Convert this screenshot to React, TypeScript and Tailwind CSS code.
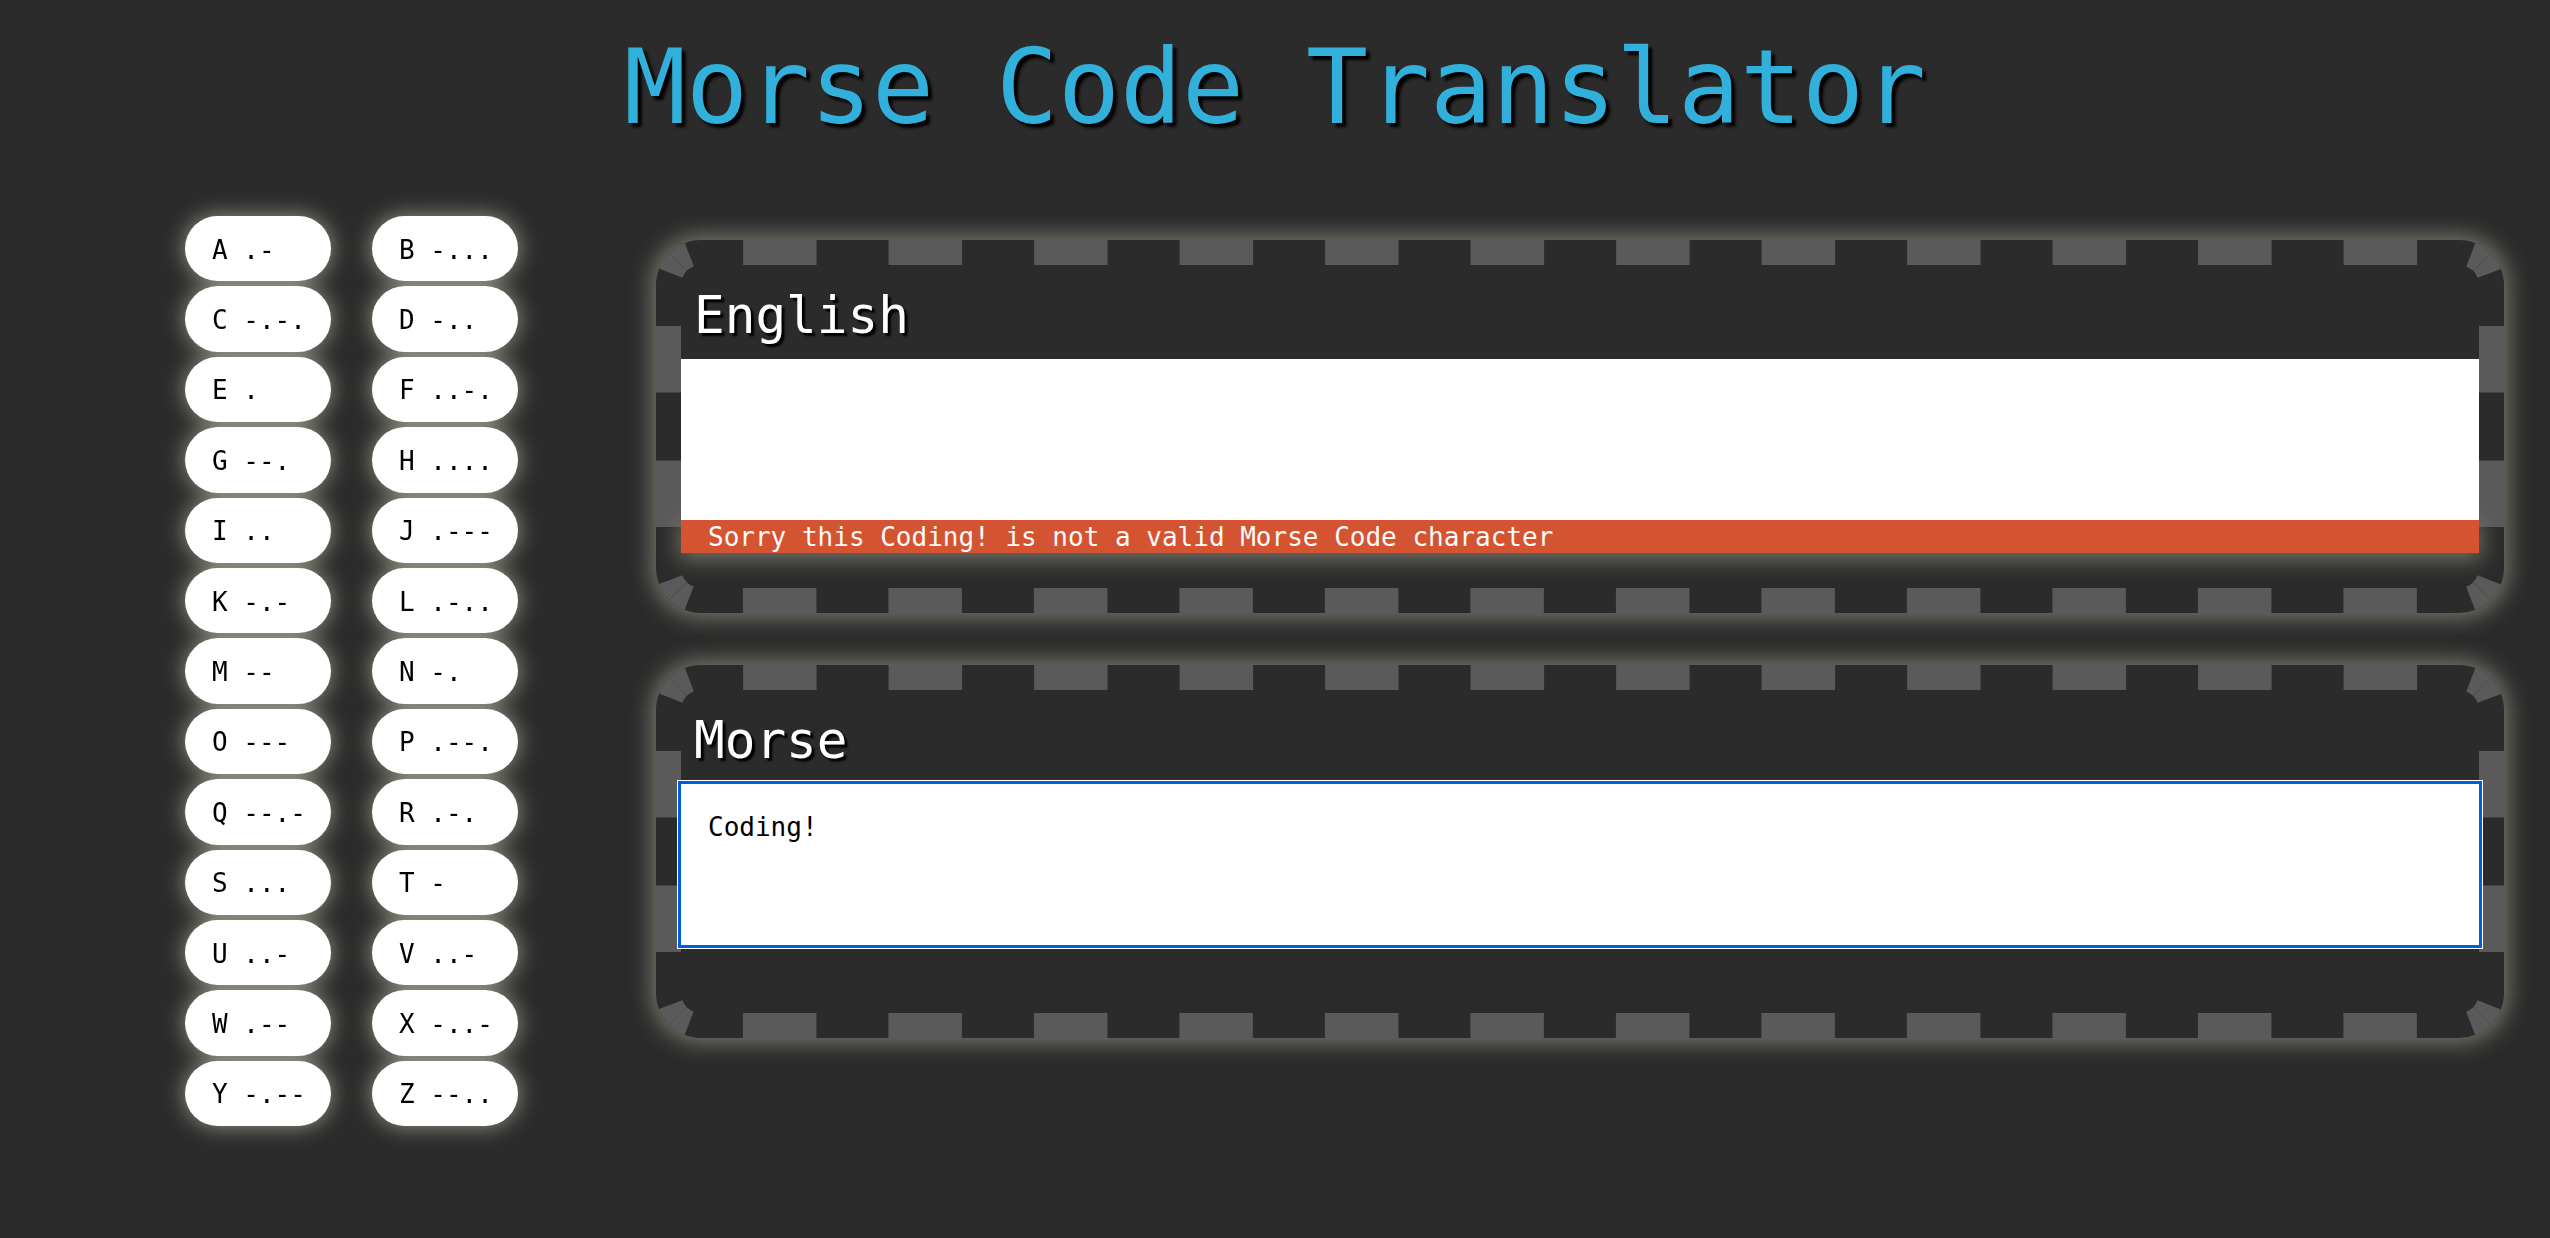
import React, { useLayoutEffect, useRef, useState } from 'react';

const MORSE: [string, string][] = [
  ['A', '.-'], ['B', '-...'], ['C', '-.-.'], ['D', '-..'], ['E', '.'], ['F', '..-.'],
  ['G', '--.'], ['H', '....'], ['I', '..'], ['J', '.---'], ['K', '-.-'], ['L', '.-..'],
  ['M', '--'], ['N', '-.'], ['O', '---'], ['P', '.--.'], ['Q', '--.-'], ['R', '.-.'],
  ['S', '...'], ['T', '-'], ['U', '..-'], ['V', '..-'], ['W', '.--'], ['X', '-..-'],
  ['Y', '-.--'], ['Z', '--..'],
];

const mono = "font-['DejaVu_Sans_Mono',monospace]";

// border is 25px wide, corner radius 45px -> stroke centre at 12.5, radius 32.5
const BW = 25;
const C = BW / 2;
const R = 45 - C;
const HALF_ARC = (R * Math.PI) / 4;

// dash list for one side: starts and ends in the middle of the corner arcs
const sideDashes = (straight: number, dash: number, lead: number) => {
  const span = straight - 2 * lead;
  const n = Math.max(0, Math.round((span / dash - 1) / 2));
  const gap = (span - n * dash) / (n + 1);
  const list = [HALF_ARC - 12, 12 + lead];
  for (let i = 0; i < n; i++) list.push(gap, dash);
  list.push(gap, lead + 12, HALF_ARC - 12, 0);
  return list.map((v) => v.toFixed(2)).join(' ');
};

const DashedFrame = ({ w, h }: { w: number; h: number }) => {
  if (!w || !h) return null;
  const m = R * Math.SQRT1_2;
  const tl = [C + R - m, C + R - m];
  const tr = [w - C - R + m, C + R - m];
  const br = [w - C - R + m, h - C - R + m];
  const bl = [C + R - m, h - C - R + m];
  const arc = (x: number, y: number) => `A ${R} ${R} 0 0 1 ${x} ${y}`;
  const top = `M ${tl[0]} ${tl[1]} ${arc(C + R, C)} L ${w - C - R} ${C} ${arc(tr[0], tr[1])}`;
  const right = `M ${tr[0]} ${tr[1]} ${arc(w - C, C + R)} L ${w - C} ${h - C - R} ${arc(br[0], br[1])}`;
  const bottom = `M ${br[0]} ${br[1]} ${arc(w - C - R, h - C)} L ${C + R} ${h - C} ${arc(bl[0], bl[1])}`;
  const left = `M ${bl[0]} ${bl[1]} ${arc(C, h - C - R)} L ${C} ${C + R} ${arc(tl[0], tl[1])}`;
  const sx = w - 2 * C - 2 * R;
  const sy = h - 2 * C - 2 * R;
  const horiz = sideDashes(sx, 72, 42);
  const vert = sideDashes(sy, 68, 41);
  return (
    <svg className="pointer-events-none absolute -inset-[25px]" width={w} height={h}>
      <g fill="none" stroke="#5b5a5b" strokeWidth={BW}>
        <path d={top} strokeDasharray={horiz} />
        <path d={right} strokeDasharray={vert} />
        <path d={bottom} strokeDasharray={horiz} />
        <path d={left} strokeDasharray={vert} />
      </g>
    </svg>
  );
};

const Panel = ({
  title,
  value,
  onChange,
  error,
  focused,
}: {
  title: string;
  value: string;
  onChange: (v: string) => void;
  error?: string;
  focused?: boolean;
}) => {
  const ref = useRef<HTMLElement>(null);
  const [size, setSize] = useState({ w: 0, h: 0 });

  useLayoutEffect(() => {
    const el = ref.current;
    if (!el) return;
    const measure = () => setSize({ w: el.offsetWidth, h: el.offsetHeight });
    measure();
    const ro = new ResizeObserver(measure);
    ro.observe(el);
    return () => ro.disconnect();
  }, []);

  return (
    <section
      ref={ref}
      className="relative rounded-[45px] border-[25px] border-transparent bg-[#2b2b2b] pb-[35px] pt-[21px] shadow-[0_0_22px_4px_#7b7a6e]"
    >
      <DashedFrame w={size.w} h={size.h} />
      <div className="relative">
        <h2 className={`${mono} pl-[13px] text-[51px] leading-[59px] text-white [text-shadow:3px_3px_2px_#000]`}>
          {title}
        </h2>
        <div className="mt-[14px]">
          <textarea
            value={value}
            onChange={(e) => onChange(e.target.value)}
            autoFocus={focused}
            className={`${mono} relative block h-[161px] w-full resize-none bg-white px-[27px] pb-[20px] pt-[28px] text-[26px] leading-[30px] text-black caret-black ${
              focused
                ? 'outline-[3px] outline-solid outline-[#005fe0] shadow-[0_0_0_4px_#fff]'
                : 'outline-none'
            }`}
          />
          {error ? (
            <div
              className={`${mono} h-[33px] bg-[#d45431] px-[27px] text-[26px] leading-[34px] text-[#fafafa] shadow-[0_4px_22px_2px_#77766b]`}
            >
              {error}
            </div>
          ) : (
            <div className="h-[33px]" />
          )}
        </div>
      </div>
    </section>
  );
};

export default function App() {
  const [english, setEnglish] = useState('');
  const [morse, setMorse] = useState('Coding!');

  return (
    <div className="min-h-screen bg-[#2b2b2b] pb-10">
      <h1
        className={`${mono} pt-[26px] text-center text-[103px] leading-[122px] text-[#31b0db] [text-shadow:4px_4px_3px_#000]`}
      >
        Morse Code Translator
      </h1>

      <div className="mt-[68px] flex items-start pl-[185px] pr-[46px]">
        <div className="grid grid-cols-[146px_146px] gap-x-[41px] gap-y-[5px] [filter:drop-shadow(0_0_11px_#999889)]">
          {MORSE.map(([letter, code]) => (
            <button
              key={letter}
              className={`${mono} flex h-[65.4px] items-center rounded-full bg-white pl-[27px] pt-[3px] text-left text-[26px] text-black`}
            >
              {letter} {code}
            </button>
          ))}
        </div>

        <div className="ml-[138px] mt-[24px] flex flex-1 flex-col gap-[52px]">
          <Panel
            title="English"
            value={english}
            onChange={setEnglish}
            error="Sorry this Coding! is not a valid Morse Code character"
          />
          <Panel title="Morse" value={morse} onChange={setMorse} focused />
        </div>
      </div>
    </div>
  );
}
